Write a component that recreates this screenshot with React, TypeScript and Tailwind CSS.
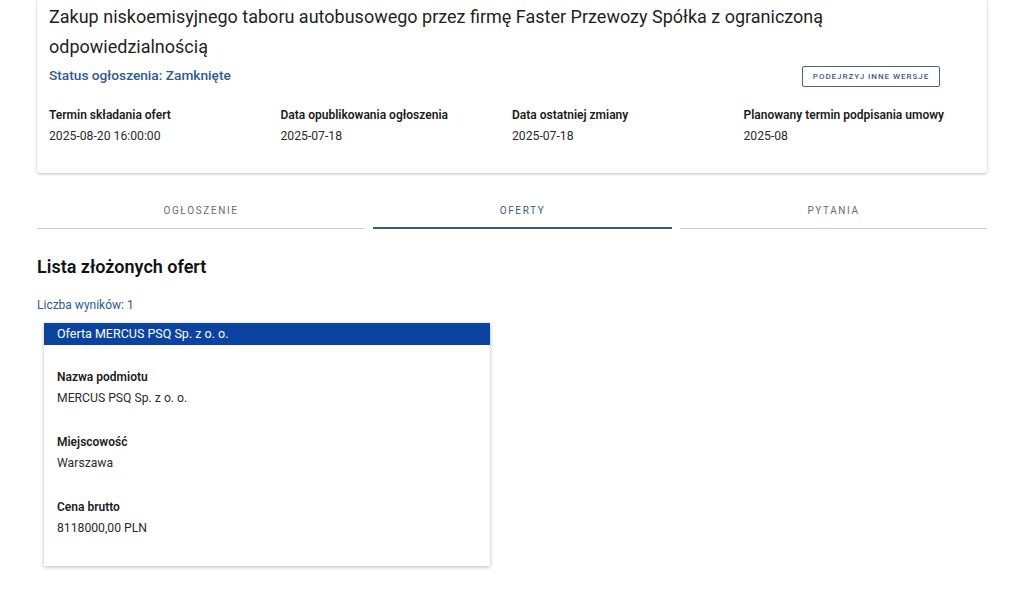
import React from "react";

const details = [
    { label: "Termin składania ofert", value: "2025-08-20 16:00:00" },
    { label: "Data opublikowania ogłoszenia", value: "2025-07-18" },
    { label: "Data ostatniej zmiany", value: "2025-07-18" },
    { label: "Planowany termin podpisania umowy", value: "2025-08" },
];

const tabs = [
    { name: "OGŁOSZENIE", width: "w-[328px]", active: false },
    { name: "OFERTY", width: "w-[299px]", active: true },
    { name: "PYTANIA", width: "flex-1", active: false },
];

const offerFields = [
    { label: "Nazwa podmiotu", value: "MERCUS PSQ Sp. z o. o." },
    { label: "Miejscowość", value: "Warszawa" },
    { label: "Cena brutto", value: "8118000,00 PLN" },
];

export default function App() {
    return (
        <div className="min-h-[590px] bg-white px-[37px] text-[#1b1b1b]" style={{ fontFamily: "Roboto, 'Noto Sans', sans-serif" }}>
            {/* Header card */}
            <div className="bg-white rounded-b-[3px] shadow-[0_1px_3px_rgba(0,0,0,0.25)] px-[12px] pt-[2px] pb-[29px]">
                <h1 className="text-[18px] leading-[30px] font-normal text-[#1f1f1f]">
                    Zakup niskoemisyjnego taboru autobusowego przez firmę Faster Przewozy Spółka z ograniczoną odpowiedzialnością
                </h1>
                <div className="flex items-center justify-between h-[24px] mt-[1px]">
                    <p className="text-[13.7px] font-medium text-[#2c5b92]">Status ogłoszenia: Zamknięte</p>
                    <button className="mr-[35px] mt-[3px] w-[138px] h-[21px] border-[1.5px] border-[#4a6585] rounded-[2px] text-[8px] font-medium tracking-[0.12em] text-[#3d5a80]">
                        PODEJRZYJ INNE WERSJE
                    </button>
                </div>
                <div className="grid grid-cols-4 mt-[20px]">
                    {details.map((d) => (
                        <div key={d.label}>
                            <p className="text-[12px] leading-[16px] font-semibold text-[#1b1b1b]">{d.label}</p>
                            <p className="text-[12.2px] leading-[16px] mt-[5px] text-[#2b2b2b]">{d.value}</p>
                        </div>
                    ))}
                </div>
            </div>

            {/* Tabs */}
            <div className="flex gap-[8px] mt-[17px]">
                {tabs.map((t) => (
                    <div key={t.name} className={`${t.width} flex flex-col`}>
                        <div className={`pt-[13px] pb-[8px] text-center text-[10px] leading-[16px] tracking-[0.16em] ${t.active ? "text-[#3b5a7c]" : "text-[#6b6b6b]"}`}>
                            {t.name}
                        </div>
                        {t.active ? (
                            <div className="h-[2px] bg-[#3b5a7c]" />
                        ) : (
                            <div className="h-[1px] mt-[1px] bg-[#cfcfcf]" />
                        )}
                    </div>
                ))}
            </div>

            {/* Offers */}
            <h2 className="mt-[26px] text-[18px] leading-[24px] font-semibold text-[#111]">Lista złożonych ofert</h2>
            <p className="mt-[18px] text-[12px] leading-[16px] text-[#2c5b92]">Liczba wyników: 1</p>

            <div className="mt-[10px] ml-[7px] w-[446px] bg-white shadow-[0_1px_4px_rgba(0,0,0,0.28)]">
                <div className="h-[22px] bg-[#0b44a0] px-[13px] flex items-center text-[12.5px] font-normal text-white">
                    Oferta MERCUS PSQ Sp. z o. o.
                </div>
                <div className="px-[13px] pt-[24px] pb-[30px] flex flex-col gap-[28px]">
                    {offerFields.map((f) => (
                        <div key={f.label}>
                            <p className="text-[12px] leading-[16px] font-semibold text-[#1b1b1b]">{f.label}</p>
                            <p className="text-[12.2px] leading-[16px] mt-[5px] text-[#2b2b2b]">{f.value}</p>
                        </div>
                    ))}
                </div>
            </div>
        </div>
    );
}
